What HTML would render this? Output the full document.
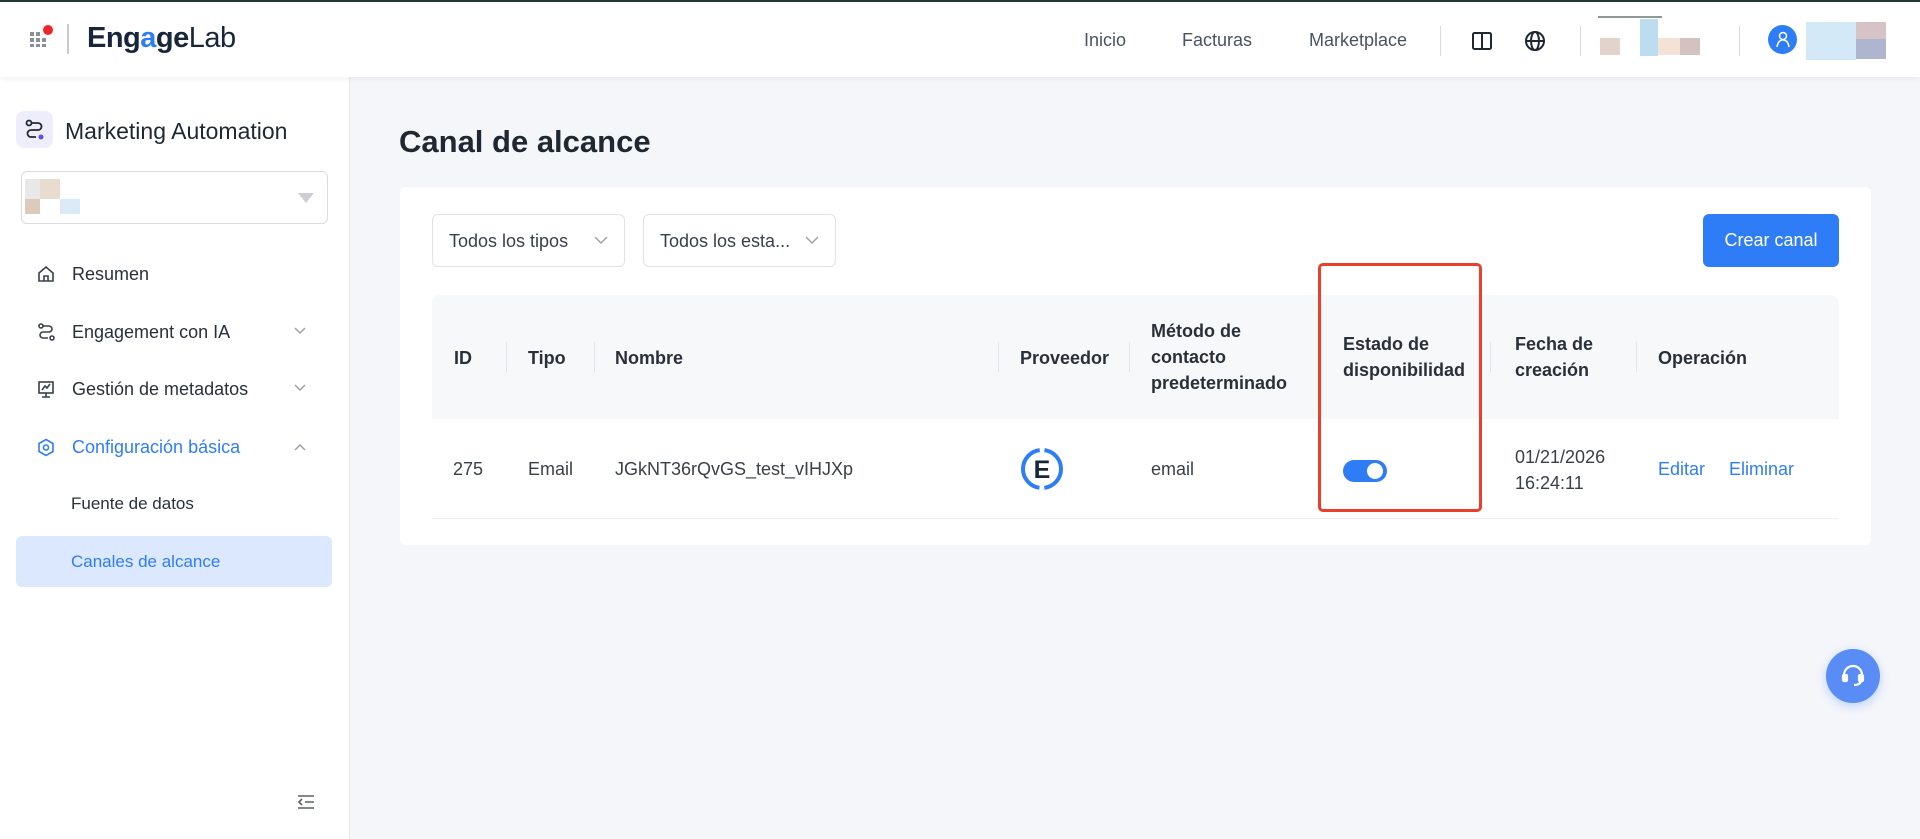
<!DOCTYPE html>
<html><head><meta charset="utf-8"><style>
*{box-sizing:border-box;margin:0;padding:0}
body{width:1920px;height:839px;overflow:hidden;background:#f5f6fa;font-family:"Liberation Sans",sans-serif;color:#1f2733;position:relative}
.abs{position:absolute}
.hdr{left:0;top:0;width:1920px;height:77px;background:#fff;border-top:2px solid #1f3a33;box-shadow:0 2px 6px rgba(0,0,0,.06);z-index:2}
.nav{font-size:18px;color:#4a5361;top:28px}
.vd{width:1px;height:30px;background:#d6d9de;top:24px}
.side{left:0;top:77px;width:350px;height:762px;background:#fff;border-right:1px solid #e6e8ec}
.mi{font-size:18px;color:#2a303a;left:72px}
.card{left:400px;top:187px;width:1471px;height:358px;background:#fff;border-radius:6px}
.sel{height:53px;border:1px solid #dfe2e7;border-radius:6px;background:#fff;font-size:18px;color:#3a404a;padding:16px 0 0 16px}
.th{top:295px;left:432px;width:1407px;height:124px;background:#f7f8fa;border-radius:8px 8px 0 0}
.h{font-size:18px;font-weight:bold;color:#2a303a;line-height:26px}
.sep{width:1px;height:30px;background:#e3e5e9;top:342px}
.c{font-size:18px;color:#3a404a;top:459px}
</style></head><body>
<div class="abs hdr">
 <svg class="abs" style="left:29px;top:22px" width="24" height="24"><g fill="#8a8f98"><rect x="1" y="8" width="4" height="4"/><rect x="7" y="8" width="4" height="4"/><rect x="1" y="14" width="4" height="4"/><rect x="7" y="14" width="4" height="4"/><rect x="13" y="14" width="4" height="4"/><rect x="1" y="20" width="4" height="3"/><rect x="7" y="20" width="4" height="3"/><rect x="13" y="20" width="4" height="3"/></g><circle cx="19" cy="6" r="5" fill="#f0262b"/></svg>
 <div class="abs" style="left:67px;top:22px;width:2px;height:30px;background:#c8ccd2"></div>
 <div class="abs" style="left:87px;top:20px;font-size:29px;font-weight:bold;color:#17263a;letter-spacing:-0.5px">Eng<span style="color:#2f7df6">a</span>ge<span style="font-weight:normal">Lab</span></div>
 <div class="abs nav" style="left:1084px">Inicio</div>
 <div class="abs nav" style="left:1182px">Facturas</div>
 <div class="abs nav" style="left:1309px">Marketplace</div>
 <div class="abs vd" style="left:1440px"></div>
 <svg class="abs" style="left:1471px;top:29px" width="22" height="20" fill="none" stroke="#1f2733" stroke-width="2"><rect x="2" y="2" width="18" height="16" rx="1.5"/><line x1="11" y1="2" x2="11" y2="18"/></svg>
 <svg class="abs" style="left:1524px;top:28px" width="22" height="22" fill="none" stroke="#1f2733" stroke-width="2"><circle cx="11" cy="11" r="9"/><ellipse cx="11" cy="11" rx="4" ry="9"/><line x1="2" y1="11" x2="20" y2="11"/></svg>
 <div class="abs vd" style="left:1580px"></div>
 <div class="abs" style="left:1598px;top:14px;width:64px;height:2px;background:#8d9994"></div>
 <div class="abs" style="left:1600px;top:36px;width:20px;height:17px;background:#e2d3cd"></div>
 <div class="abs" style="left:1640px;top:17px;width:18px;height:37px;background:#bcdcef"></div>
 <div class="abs" style="left:1658px;top:36px;width:22px;height:17px;background:#f5e2d6"></div>
 <div class="abs" style="left:1680px;top:36px;width:20px;height:17px;background:#d3c2bf"></div>
 <div class="abs vd" style="left:1739px"></div>
 <div class="abs" style="left:1768px;top:23px;width:29px;height:29px;border-radius:50%;background:#2f7df6"></div>
 <svg class="abs" style="left:1775px;top:29px" width="16" height="17" fill="none" stroke="#fff" stroke-width="1.5"><circle cx="8" cy="5" r="3.5"/><path d="M2 16 Q3 9 8 9 Q13 9 14 16"/></svg>
 <div class="abs" style="left:1806px;top:20px;width:50px;height:38px;background:#d3e9f8"></div>
 <div class="abs" style="left:1856px;top:20px;width:30px;height:17px;background:#d6c3c8"></div>
 <div class="abs" style="left:1856px;top:37px;width:30px;height:20px;background:#b0b5cf"></div>
</div>
<div class="abs side">
 <div class="abs" style="left:16px;top:34px;width:37px;height:37px;border-radius:8px;background:#eeedfc"></div>
 <svg class="abs" style="left:24px;top:42px" width="22" height="22" fill="none" stroke="#1f2733" stroke-width="1.8"><circle cx="5" cy="4" r="2.5"/><path d="M7.5 4 H14 a3.5 3.5 0 0 1 0 7 H7 a3.5 3.5 0 0 0 0 7 H12"/><circle cx="17" cy="18" r="2.5" fill="#5b4ff0" stroke="none"/></svg>
 <div class="abs" style="left:65px;top:41px;font-size:23px;color:#1f2733">Marketing Automation</div>
 <div class="abs" style="left:21px;top:94px;width:307px;height:53px;border:1px solid #d9dce1;border-radius:6px"></div>
 <div class="abs" style="left:25px;top:102px;width:15px;height:32px;background:#e8e8e8"></div>
 <div class="abs" style="left:40px;top:102px;width:20px;height:20px;background:#e8dccf"></div>
 <div class="abs" style="left:25px;top:122px;width:15px;height:15px;background:#dccabb"></div>
 <div class="abs" style="left:60px;top:122px;width:20px;height:15px;background:#dbeaf7"></div>
 <div class="abs" style="left:298px;top:116px;width:0;height:0;border-left:8px solid transparent;border-right:8px solid transparent;border-top:10px solid #ccced3"></div>
 <svg class="abs" style="left:37px;top:188px" width="18" height="18" fill="none" stroke="#3a404a" stroke-width="1.6"><path d="M2 8 L9 2 L16 8 V16 H2 Z"/><path d="M7 16 V11 H11 V16"/></svg>
 <div class="abs mi" style="top:187px">Resumen</div>
 <svg class="abs" style="left:37px;top:246px" width="18" height="18" fill="none" stroke="#3a404a" stroke-width="1.6"><circle cx="4" cy="3" r="2"/><path d="M6 3 H12 a3 3 0 0 1 0 6 H6 a3 3 0 0 0 0 6 H11"/><circle cx="15" cy="15" r="2"/></svg>
 <div class="abs mi" style="top:245px">Engagement con IA</div>
 <svg class="abs" style="left:293px;top:249px" width="14" height="10" fill="none" stroke="#9aa0a8" stroke-width="1.5"><path d="M2 2 L7 7 L12 2"/></svg>
 <svg class="abs" style="left:37px;top:303px" width="18" height="18" fill="none" stroke="#3a404a" stroke-width="1.6"><rect x="2" y="2" width="14" height="11"/><path d="M5 10 L8 6 L10 8 L13 4 M9 13 V17 M5 17 H13"/></svg>
 <div class="abs mi" style="top:302px">Gestión de metadatos</div>
 <svg class="abs" style="left:293px;top:306px" width="14" height="10" fill="none" stroke="#9aa0a8" stroke-width="1.5"><path d="M2 2 L7 7 L12 2"/></svg>
 <svg class="abs" style="left:37px;top:361px" width="18" height="19" fill="none" stroke="#2f7df6" stroke-width="1.6"><path d="M9 1.5 L16 5.5 V13.5 L9 17.5 L2 13.5 V5.5 Z"/><circle cx="9" cy="9.5" r="2.5"/></svg>
 <div class="abs mi" style="top:360px;color:#2f7df6">Configuración básica</div>
 <svg class="abs" style="left:293px;top:365px" width="14" height="10" fill="none" stroke="#9aa0a8" stroke-width="1.5"><path d="M2 8 L7 3 L12 8"/></svg>
 <div class="abs" style="left:71px;top:417px;font-size:17px;color:#2a303a">Fuente de datos</div>
 <div class="abs" style="left:16px;top:459px;width:316px;height:51px;border-radius:6px;background:#dbe8fd"></div>
 <div class="abs" style="left:71px;top:475px;font-size:17px;color:#2f7df6">Canales de alcance</div>
 <svg class="abs" style="left:297px;top:717px" width="18" height="16" fill="none" stroke="#5a606a" stroke-width="1.6"><path d="M1 2 H17 M8 8 H17 M1 14 H17 M5 5 L2 8 L5 11"/></svg>
</div>
<div class="abs" style="left:399px;top:124px;font-size:31px;font-weight:bold;color:#1f2733">Canal de alcance</div>
<div class="abs card"></div>
<div class="abs sel" style="left:432px;top:214px;width:193px">Todos los tipos</div>
<svg class="abs" style="left:594px;top:236px" width="14" height="9" fill="none" stroke="#9aa0a8" stroke-width="1.4"><path d="M1 1 L7 7 L13 1"/></svg>
<div class="abs sel" style="left:643px;top:214px;width:193px">Todos los esta...</div>
<svg class="abs" style="left:805px;top:236px" width="14" height="9" fill="none" stroke="#9aa0a8" stroke-width="1.4"><path d="M1 1 L7 7 L13 1"/></svg>
<div class="abs" style="left:1703px;top:214px;width:136px;height:53px;border-radius:6px;background:#2f7df6;color:#fff;font-size:18px;text-align:center;line-height:53px">Crear canal</div>
<div class="abs th"></div>
<div class="abs h" style="left:454px;top:345px">ID</div>
<div class="abs h" style="left:528px;top:345px">Tipo</div>
<div class="abs h" style="left:615px;top:345px">Nombre</div>
<div class="abs h" style="left:1020px;top:345px">Proveedor</div>
<div class="abs h" style="left:1151px;top:318px">Método de<br>contacto<br>predeterminado</div>
<div class="abs h" style="left:1343px;top:331px">Estado de<br>disponibilidad</div>
<div class="abs h" style="left:1515px;top:331px">Fecha de<br>creación</div>
<div class="abs h" style="left:1658px;top:345px">Operación</div>
<div class="abs sep" style="left:506px"></div>
<div class="abs sep" style="left:594px"></div>
<div class="abs sep" style="left:998px"></div>
<div class="abs sep" style="left:1129px"></div>
<div class="abs sep" style="left:1490px"></div>
<div class="abs sep" style="left:1636px"></div>
<div class="abs" style="left:432px;top:518px;width:1407px;height:1px;background:#eceef1"></div>
<div class="abs c" style="left:453px">275</div>
<div class="abs c" style="left:528px">Email</div>
<div class="abs c" style="left:615px">JGkNT36rQvGS_test_vIHJXp</div>
<svg class="abs" style="left:1020px;top:447px" width="44" height="44"><circle cx="22" cy="22" r="19" fill="none" stroke="#2f7df6" stroke-width="4" stroke-dasharray="54.7 5" stroke-dashoffset="57.2" transform="rotate(-90 22 22)"/><text x="22" y="31" text-anchor="middle" font-family="Liberation Sans" font-size="25" font-weight="bold" fill="#17263a">E</text></svg>
<div class="abs c" style="left:1151px">email</div>
<div class="abs" style="left:1343px;top:460px;width:44px;height:22px;border-radius:11px;background:#2f7df6"></div>
<div class="abs" style="left:1367px;top:463px;width:16px;height:16px;border-radius:50%;background:#fff"></div>
<div class="abs c" style="left:1515px;top:444px;line-height:26px">01/21/2026<br>16:24:11</div>
<div class="abs c" style="left:1658px;color:#2f7df6">Editar</div>
<div class="abs c" style="left:1729px;color:#2f7df6">Eliminar</div>
<div class="abs" style="left:1318px;top:263px;width:164px;height:249px;border:3px solid #e8402c;border-radius:5px"></div>
<div class="abs" style="left:1826px;top:649px;width:54px;height:54px;border-radius:50%;background:#5a8cf5;box-shadow:0 3px 10px rgba(47,125,246,.3)"></div>
<svg class="abs" style="left:1840px;top:663px" width="26" height="26" fill="none" stroke="#fff" stroke-width="2.2"><path d="M4 15 V12 a9 9 0 0 1 18 0 V15"/><rect x="3" y="12" width="4" height="6" rx="1" fill="#fff"/><rect x="19" y="12" width="4" height="6" rx="1" fill="#fff"/><path d="M21 18 Q20 22 14 22"/></svg>
</body></html>
